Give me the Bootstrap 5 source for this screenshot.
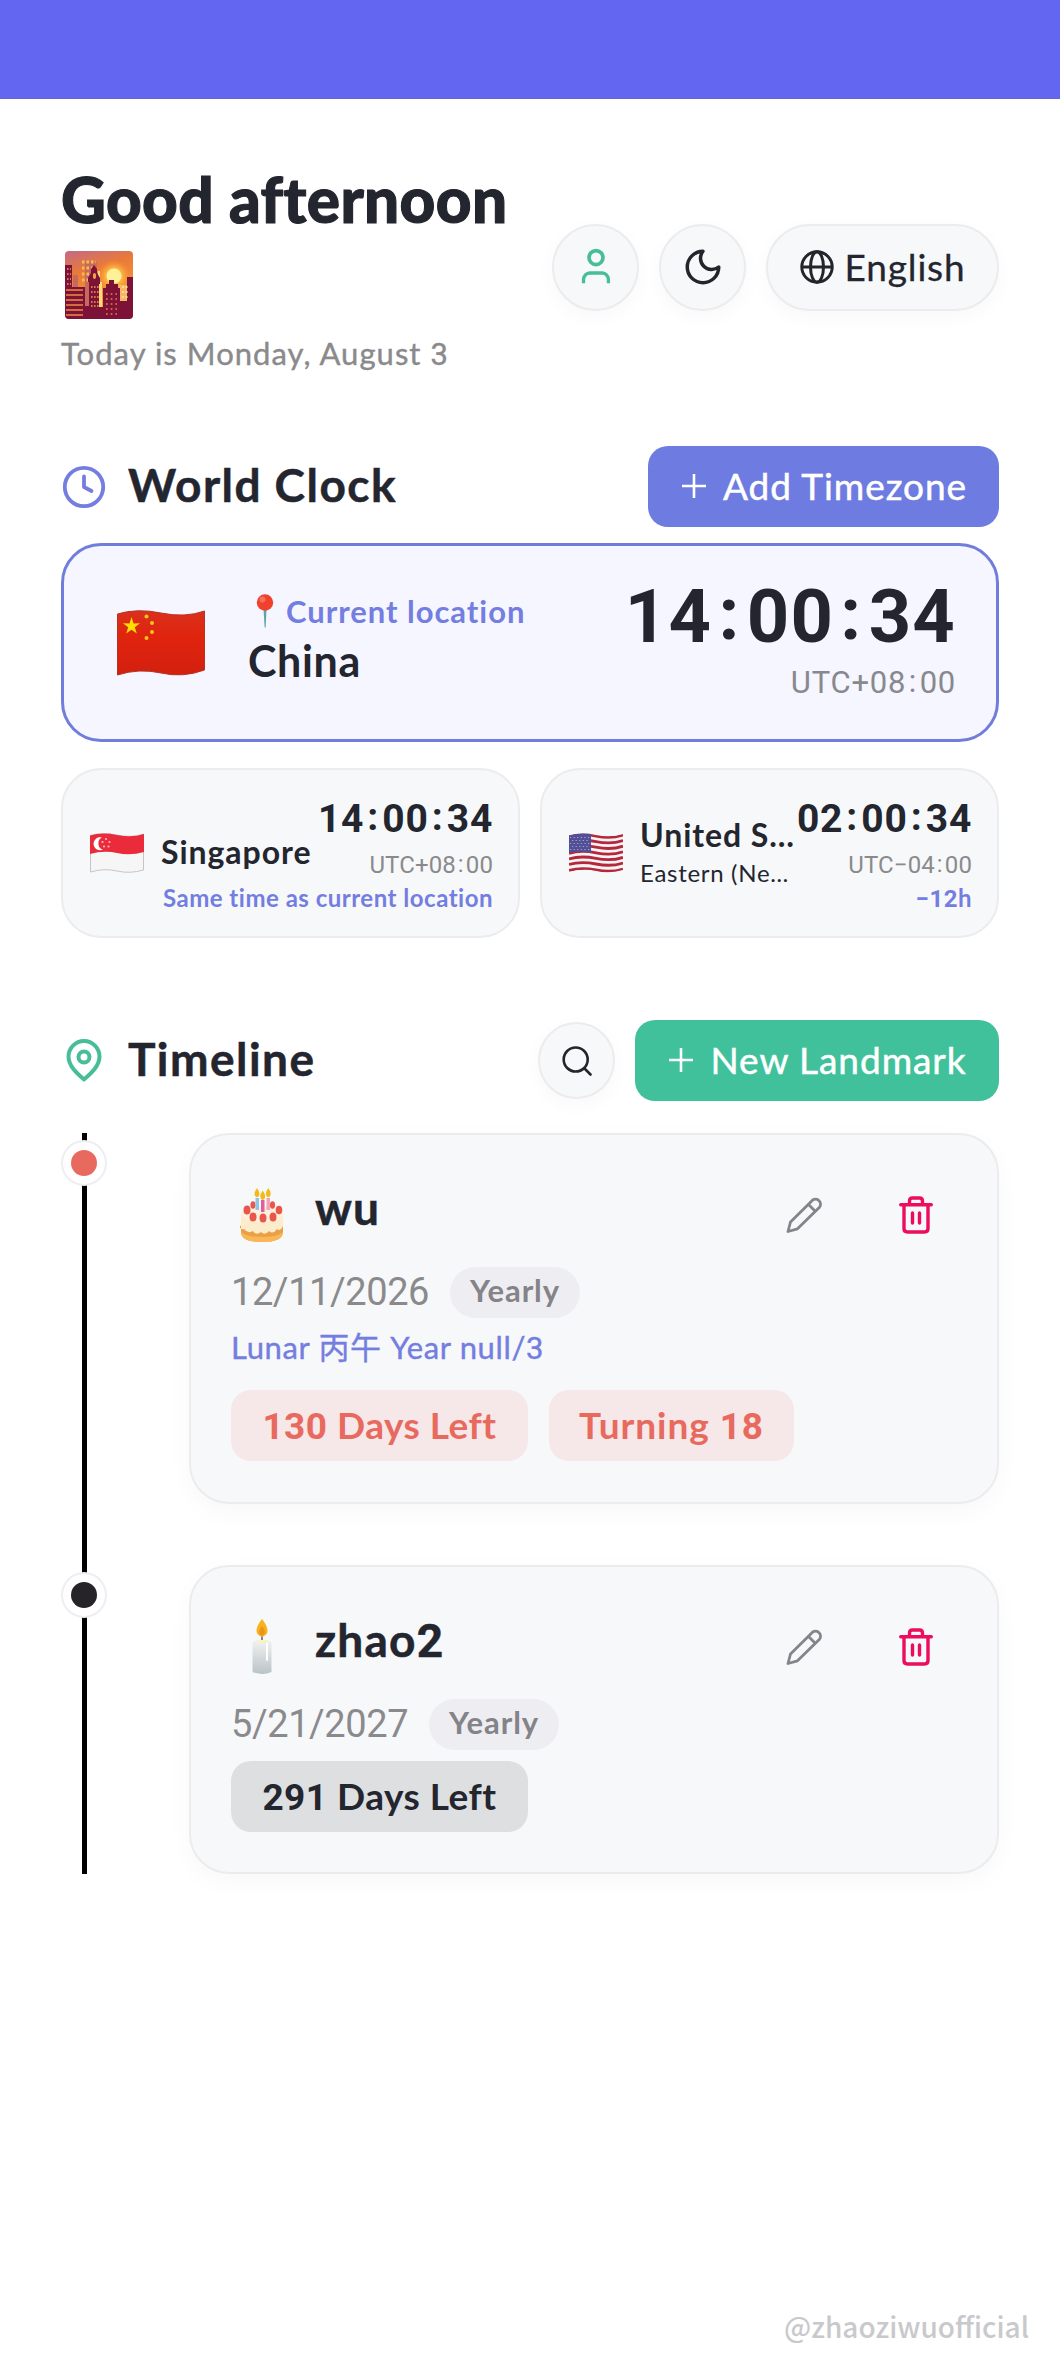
<!DOCTYPE html>
<html lang="en">
<head>
<meta charset="utf-8">
<meta name="viewport" content="width=device-width, initial-scale=1">
<title>World Clock &amp; Timeline</title>
<link href="https://cdn.jsdelivr.net/npm/bootstrap@5.3.0/dist/css/bootstrap.min.css" rel="stylesheet">
<style>
:root{--ink:#23252f;--soft:#8a8a8c;--indigo:#6e7be0;--green:#40c19b;--panel:#f7f8fa;--edge:#ececef}
body{font-family:Lato,"Noto Sans CJK SC",sans-serif;color:var(--ink);background:#fff;height:2376px;position:relative;overflow-x:hidden}
svg{display:block;flex:none}
.topbar{height:99px;background:#6366f0;border-bottom:1px solid #6a62d2}
.page{padding:62px 61px 0}
.num{font-family:Roboto,sans-serif}
span.inl{line-height:0}
.nowrap{white-space:nowrap}
.hello{font-size:62px;line-height:76px;font-weight:900;margin:0;letter-spacing:.35px;-webkit-text-stroke:1.1px var(--ink)}
.skyline{margin:14px 0 0 4px}
.today{font-size:31px;line-height:44px;color:var(--soft);margin-top:12px;letter-spacing:1.04px;-webkit-text-stroke:.4px var(--soft)}
.tools{gap:20px;margin-top:-2px}
.soft-btn{height:87px;border:2px solid var(--edge);border-radius:44px;background:var(--panel);box-shadow:0 6px 20px rgba(0,0,0,.03);padding:0;color:var(--ink)}
.soft-btn.round{width:87px}
.soft-btn.find{width:77px;height:77px;margin-right:20px}
.soft-btn.lang{width:233px;font-size:37px;line-height:40px;letter-spacing:.85px;gap:11px;-webkit-text-stroke:.3px var(--ink)}
.sect{height:81px}
.sect h2{font-size:46px;line-height:60px;font-weight:700;margin:0 0 0 21px;padding-bottom:4px;letter-spacing:1.46px;-webkit-text-stroke:.5px var(--ink)}
.act{height:81px;border-radius:20px;color:#fff;font-size:37px;border:0;padding:0 0 2px 2px;gap:17px;letter-spacing:.95px;-webkit-text-stroke:.5px #fff}
.act-add{width:351px;background:var(--indigo)}
.act-new{width:364px;background:var(--green)}
.home{height:199px;border:3px solid #707ddb;border-radius:40px;background:#f5f6ff;margin-top:16px;padding:31px 40px 0 53px}
.flag-lg{margin-top:33px}
.place{margin:10px 0 0 43px}
.loc{font-size:31px;line-height:48px;font-weight:700;color:#737ee0;letter-spacing:.96px;padding-left:8px;gap:12px}
.cn{font-size:43px;line-height:52px;font-weight:700;letter-spacing:.66px}
.co{padding:0 .085em;position:relative;top:-.04em}
.big{font-size:74px;line-height:80px;font-weight:700;letter-spacing:1.2px}
.utc{font-size:31px;line-height:44px;color:#88888e;margin-top:4px;letter-spacing:.75px}
.zones{margin-top:26px}
.zone{width:459px;height:170px;border:2px solid var(--edge);border-radius:40px;background:var(--panel);padding:0 25px 0 27px}
.stack{display:grid;flex:1;align-items:center;margin-left:17px}
.stack>*{grid-area:1/1}
.who{padding-bottom:3px}
.when{padding-top:4px}
.zname{font-size:32px;line-height:40px;font-weight:700;letter-spacing:.95px}
.zsub{font-size:24px;line-height:30px;margin-top:3px;letter-spacing:.7px}
.ztime{font-size:39px;line-height:44px;font-weight:700;letter-spacing:.7px}
.zutc{font-size:24px;line-height:28px;color:var(--soft);margin-top:10px;letter-spacing:.1px}
.zdiff{font-size:24px;line-height:32px;font-weight:700;color:#737ee0;margin-top:3px;letter-spacing:.5px}
.timeline-head{margin-top:82px}
.rail{width:46px;background:linear-gradient(#000,#000) 21px 0/5px 100% no-repeat}
.dot{width:46px;height:46px;border-radius:50%;background:#fff;border:2px solid #efedf3;margin-top:7px}
.dot i{width:26px;height:26px;border-radius:50%;background:#e86a5e}
.dot i.past{background:#262429}
.mark-card{width:810px;border:2px solid var(--edge);border-radius:40px;background:var(--panel);box-shadow:0 8px 26px rgba(0,0,0,.03);padding:48px 64px 0 40px}
.mark-a{height:371px;margin-bottom:61px}
.mark-b{height:309px}
.mark-head{height:64px}
.emo{margin-left:9px}
.bin{margin-left:77px}
.mname{font-size:46px;line-height:60px;font-weight:700;padding-bottom:14px;margin-left:31px;letter-spacing:1.2px;-webkit-text-stroke:.5px var(--ink)}
.mrow{margin-top:20px;gap:21px}
.mdate{font-size:38px;line-height:51px;color:var(--soft);letter-spacing:-.42px}
.often{height:51px;width:130px;border-radius:26px;background:#eeeef2;color:#838388;font-size:31px;line-height:46px;font-weight:700;letter-spacing:.92px}
.lunar{font-size:31px;line-height:44px;color:#737ee0;margin-top:7px;letter-spacing:.63px;-webkit-text-stroke:.4px #737ee0}
.tagrow{margin-top:21px;gap:21px}
.tagrow.tight{margin-top:11px}
.tagx{height:71px;width:297px;border-radius:20px;font-size:37px;line-height:69px;font-weight:700;background:#f6e7e8;color:#e86a5e;letter-spacing:.5px}
.tagx.age{width:245px;letter-spacing:.94px}
.tagx.dark{background:#dedfe1;color:var(--ink)}
.credit{position:absolute;right:31px;top:2304px;font:500 28px/44px "Noto Sans CJK SC",sans-serif;color:#c9c9cc}
</style>
</head>
<body>
<div class="topbar"></div>
<main class="page">
  <header class="d-flex justify-content-between align-items-center">
    <div>
      <h1 class="hello nowrap">Good afternoon</h1>
      <svg class="skyline" width="68" height="68" viewBox="0 0 68 68"><defs><linearGradient id="sk" x1="0" y1="0" x2=".3" y2="1"><stop offset="0" stop-color="#c26a86"/><stop offset=".35" stop-color="#ea7a38"/><stop offset="1" stop-color="#f9a63c"/></linearGradient><clipPath id="rc"><rect width="68" height="68" rx="4"/></clipPath><radialGradient id="gl"><stop offset=".4" stop-color="#ffc94a"/><stop offset="1" stop-color="#ff9a2e" stop-opacity="0"/></radialGradient></defs><g clip-path="url(#rc)"><rect width="68" height="68" fill="url(#sk)"/><circle cx="49" cy="25" r="16" fill="url(#gl)"/><circle cx="49" cy="25" r="7.500" fill="#fff09a"/><path d="M8 24h5v12h7V11h12v45H8z" fill="#c8695f"/><path d="M17 11h14M17 17h12M17 23h8M17 29h7" stroke="#f4c04c" stroke-width="3" stroke-dasharray="2.500 2"/><path d="M54 34h8V28h2v24H54z" fill="#f6b768"/><path d="M33 20h2v11h2v27h-3z" fill="#ffd978"/><path d="M0 14h7v22h13v19h4V31h-1v-4l3-5v-4l3-4 3 4v4l3 5v6h-1v23h4V37h3v-4h3v-4h5v4h4v4h2v13h7V26h6v42H0z" fill="#7d1238"/><path d="M1 39h17M1 44h17M1 49h17M1 54h17M1 59h17M1 64h17" stroke="#ee8a3c" stroke-width="1.500"/><path d="M2 18h4M2 23h4M2 28h4M2 33h4M26 36h8M26 41h8M26 46h8M26 51h8M26 55h8" stroke="#f2a04a" stroke-width="1.600" stroke-dasharray="1.600 1.400"/><path d="M41 43h11M41 48h11M41 53h11M41 58h11M41 63h11" stroke="#ef7f45" stroke-width="1.700" stroke-dasharray="1.700 3"/><path d="M57 36h6M57 41h6M57 46h6" stroke="#fbe08a" stroke-width="2" stroke-dasharray="2 1.500"/><ellipse cx="29.500" cy="25" rx="1.600" ry="3" fill="#f2a04a"/></g></svg>
      <div class="today nowrap">Today is Monday, August <span class="num inl">3</span></div>
    </div>
    <div class="tools d-flex">
      <button class="soft-btn round d-flex align-items-center justify-content-center"><svg width="42" height="42" viewBox="0 0 24 24" fill="none" stroke="#47bd98" stroke-width="2.100" stroke-linejoin="round"><path d="M20 21.500v-2a4 4 0 0 0-4-4H8a4 4 0 0 0-4 4v2" transform="translate(1.300 .2) scale(.89 .98)"/><circle cx="12" cy="6.600" r="4"/></svg></button>
      <button class="soft-btn round d-flex align-items-center justify-content-center"><svg width="42" height="42" viewBox="0 0 24 24" fill="none" stroke="#23252b" stroke-width="2" stroke-linecap="round" stroke-linejoin="round"><path d="M12 3a6.400 6.400 0 0 0 9 9 9 9 0 1 1-9-9Z"/></svg></button>
      <button class="soft-btn lang d-flex align-items-center justify-content-center"><svg width="34" height="34" viewBox="0 0 34 34" fill="none" stroke="#23252b" stroke-width="3"><circle cx="17" cy="17" r="15.200"/><ellipse cx="17" cy="17" rx="6.500" ry="15.200"/><path d="M2 17h30"/></svg><span>English</span></button>
    </div>
  </header>

  <section style="margin-top:71px">
    <div class="sect d-flex align-items-center">
      <svg width="46" height="46" viewBox="0 0 46 46" fill="none" stroke="#737ee0" stroke-width="3.800" stroke-linecap="round" stroke-linejoin="round"><circle cx="23" cy="23" r="19.200"/><path d="M23 12.500V23l7.500 4"/></svg>
      <h2 class="nowrap">World Clock</h2>
      <button class="act act-add ms-auto d-flex align-items-center justify-content-center"><svg width="24" height="24" viewBox="0 0 24 24" stroke="#fff" stroke-width="2.600"><path d="M12 0v24M0 12h24"/></svg><span>Add Timezone</span></button>
    </div>
    <div class="home d-flex">
      <svg class="flag-lg" width="88" height="66" viewBox="0 0 88 66"><defs><linearGradient id="cf" x2="0" y2="1"><stop offset="0" stop-color="#d9301c"/><stop offset=".4" stop-color="#e0240e"/><stop offset="1" stop-color="#d2200f"/></linearGradient></defs><path d="M.5 4Q20-2 44 3T87.500 1V60Q66 68 44 63T.5 65Z" fill="url(#cf)" stroke="#b83320"/><path d="M14.500 7l2 6.500 6.500-.3-5.200 4 2 6.300-5.300-3.800-5.300 3.800 2-6.300-5.200-4 6.500.3z" fill="#fd0"/><g fill="#f8c31a"><circle cx="29.500" cy="6.500" r="2"/><circle cx="35" cy="13" r="2"/><circle cx="35" cy="22" r="2"/><circle cx="29.500" cy="28" r="2"/></g></svg>
      <div class="place">
        <div class="loc d-flex align-items-center nowrap"><svg width="18" height="34" viewBox="0 0 18 34"><path d="M7.500 15h3l-.8 18.500h-1z" fill="#5fa3a6"/><circle cx="9" cy="8.500" r="8.200" fill="#f0412f"/><circle cx="6.500" cy="5.500" r="3" fill="#f7705c"/></svg><span>Current location</span></div>
        <div class="cn">China</div>
      </div>
      <div class="ms-auto text-end num nowrap">
        <div class="big">14<span class="co">:</span>00<span class="co">:</span>34</div>
        <div class="utc">UTC+08<span class="co">:</span>00</div>
      </div>
    </div>
    <div class="zones d-flex justify-content-between">
      <div class="zone d-flex align-items-center">
        <svg width="54" height="40" viewBox="0 0 54 40"><path d="M.5 2.500Q12-1 27 2T53.500 1V37Q40 41 27 38T.5 39Z" fill="#f6f6f6" stroke="#c8c4c4"/><path d="M0 2.500Q12-1 27 2T54 1V19Q40 23 27 20T0 21Z" fill="#e92b3c"/><path d="M12 4.500a6.500 6.500 0 1 0 1 12 5.800 6.300 0 0 1-1-12z" fill="#fff"/><g fill="#fbb8be"><circle cx="16" cy="6" r="1.100"/><circle cx="12.500" cy="9" r="1.100"/><circle cx="19.500" cy="9" r="1.100"/><circle cx="14" cy="13.500" r="1.100"/><circle cx="18.500" cy="13.500" r="1.100"/></g></svg>
        <div class="stack">
          <div class="who"><div class="zname nowrap">Singapore</div></div>
          <div class="when text-end nowrap">
            <div class="ztime num">14<span class="co">:</span>00<span class="co">:</span>34</div>
            <div class="zutc num">UTC+08<span class="co">:</span>00</div>
            <div class="zdiff">Same time as current location</div>
          </div>
        </div>
      </div>
      <div class="zone d-flex align-items-center">
        <svg width="54" height="40" viewBox="0 0 54 40"><defs><clipPath id="us"><path d="M0 2.500Q12-1 27 2T54 1V37Q40 41 27 38T0 39Z"/></clipPath></defs><g clip-path="url(#us)"><rect width="54" height="40" fill="#f7f3f4"/><g fill="none" stroke="#b4283c" stroke-width="2.850"><path d="M0 3.500Q12 0 27 3T54 2"/><path d="M0 9.100Q12 5.600 27 8.600T54 7.600"/><path d="M0 14.700Q12 11.200 27 14.200T54 13.200"/><path d="M0 20.300Q12 16.800 27 19.800T54 18.800"/><path d="M0 25.900Q12 22.400 27 25.400T54 24.400"/><path d="M0 31.500Q12 28 27 31T54 30"/><path d="M0 37.500Q12 34 27 37T54 36"/></g><path d="M0 0H22V20Q11 17 0 20Z" fill="#524f96"/><path d="M1 4.500h20M3 7.500h18M1 10.500h20M3 13.500h18M1 16.500h20" stroke="#aaa8d0" stroke-width="1.200" stroke-dasharray="1.200 2.400"/></g></svg>
        <div class="stack">
          <div class="who"><div class="zname nowrap">United S…</div><div class="zsub nowrap">Eastern (Ne…</div></div>
          <div class="when text-end nowrap">
            <div class="ztime num">02<span class="co">:</span>00<span class="co">:</span>34</div>
            <div class="zutc num">UTC−04<span class="co">:</span>00</div>
            <div class="zdiff"><span class="num inl">−12</span>h</div>
          </div>
        </div>
      </div>
    </div>
  </section>

  <section class="timeline-head">
    <div class="sect d-flex align-items-center">
      <svg width="46" height="46" viewBox="0 0 46 46" fill="none" stroke="#47bd98" stroke-width="4" stroke-linejoin="round"><path d="M23 41.500C18 37 7.500 29 7.500 18.500a15.500 15.500 0 0 1 31 0C38.500 29 28 37 23 41.500Z"/><circle cx="23" cy="19" r="5.500"/></svg>
      <h2 class="nowrap">Timeline</h2>
      <button class="soft-btn find ms-auto d-flex align-items-center justify-content-center"><svg width="30" height="30" viewBox="0 0 30 30" fill="none" stroke="#23252b" stroke-width="2.600" stroke-linecap="round"><circle cx="13.700" cy="13.500" r="12"/><path d="M22.500 22.500l6 6"/></svg></button>
      <button class="act act-new d-flex align-items-center justify-content-center"><svg width="24" height="24" viewBox="0 0 24 24" stroke="#fff" stroke-width="2.600"><path d="M12 0v24M0 12h24"/></svg><span>New Landmark</span></button>
    </div>

    <div style="margin-top:32px">
      <div class="d-flex justify-content-between">
        <div class="rail"><div class="dot d-flex align-items-center justify-content-center"><i></i></div></div>
        <article class="mark-card mark-a">
          <div class="mark-head d-flex align-items-center">
            <svg class="emo" width="44" height="54" viewBox="0 0 44 54"><path d="M1 26v18q0 10 21 10t21-10V26z" fill="#fdeccb"/><path d="M1 38v6q0 10 21 10t21-10v-6q-3 6-6 3-4 6-8 2-4 5-8 1-5 4-8-1-5 3-9-2-4 1-5-4z" fill="#e9a046"/><path d="M1 44q0 10 21 10t21-10q-5 5-21 5T1 44z" fill="#fbb657"/><ellipse cx="22" cy="26" rx="21" ry="8" fill="#fdf0dc"/><g fill="#e9574c"><ellipse cx="7" cy="22" rx="3.500" ry="4.500"/><ellipse cx="13" cy="17" rx="2.600" ry="3.800"/><ellipse cx="32.500" cy="17" rx="2.600" ry="3.800"/><ellipse cx="39" cy="22" rx="3.300" ry="4.300"/><ellipse cx="13" cy="29" rx="3.500" ry="4.500"/><ellipse cx="23" cy="30" rx="3.500" ry="4.500"/><ellipse cx="33" cy="29" rx="3.500" ry="4.500"/></g><path d="M15.500 10h3.500v12h-3.500z" fill="#8cc4ea"/><path d="M21 12h3.500v12H21z" fill="#dd5f9d"/><path d="M26.500 10h3.500v12h-3.500z" fill="#f3a3b8"/><g fill="#f6b91a"><path d="M17 0q5 7 0 9.500-5-2.500 0-9.500zM22.700 2.500q5 7 0 9.500-5-2.500 0-9.500zM28.300 0q5 7 0 9.500-5-2.500 0-9.500z"/></g></svg>
            <span class="mname">wu</span>
            <svg class="ms-auto" width="36" height="36" viewBox="0 0 36 36" fill="none" stroke="#858589" stroke-width="2.800" stroke-linejoin="round"><path d="M2 34.500L4.500 25 26.500 3.200a5 5 0 0 1 7 7L11.500 31.800zM22.500 7.500l7 7"/></svg>
            <svg class="bin" width="34" height="38" viewBox="0 0 34 38" fill="none" stroke="#ec0e5c" stroke-width="3.400" stroke-linecap="round" stroke-linejoin="round"><path d="M1.700 8.700h30.600M5 9v23.500q0 3.500 3.500 3.500h17q3.500 0 3.500-3.500V9M10.500 8V5q0-3 3-3h7q3 0 3 3v3M13.500 17v10M20.500 17v10"/></svg>
          </div>
          <div class="mrow d-flex align-items-center"><span class="mdate num">12/11/2026</span><span class="often text-center">Yearly</span></div>
          <div class="lunar nowrap">Lunar <span class="inl">丙午</span> Year null/<span class="num inl">3</span></div>
          <div class="tagrow d-flex"><div class="tagx text-center"><span class="num inl">130</span> Days Left</div><div class="tagx age text-center">Turning <span class="num inl">18</span></div></div>
        </article>
      </div>
      <div class="d-flex justify-content-between">
        <div class="rail"><div class="dot d-flex align-items-center justify-content-center"><i class="past"></i></div></div>
        <article class="mark-card mark-b">
          <div class="mark-head d-flex align-items-center">
            <svg class="emo" width="44" height="56" viewBox="0 0 44 56"><defs><linearGradient id="wx" x2="0" y2="1"><stop offset="0" stop-color="#f1f2f2"/><stop offset="1" stop-color="#b9c3c7"/></linearGradient></defs><path d="M12.500 23q9-4 19 0v30q-9 4-19 0z" fill="url(#wx)"/><path d="M13 22.500q9-4 18 0-9 3.500-18 0z" fill="#f6f3c8"/><path d="M26 24v17q2 2 2 0V24z" fill="#fff"/><path d="M22 14v7" stroke="#4b6a6c" stroke-width="1.500"/><path d="M22 0q11 14 0 18-11-4 0-18z" fill="#f7b21c"/><path d="M22 7q6 7 0 10-6-3 0-10z" fill="#f1921a"/></svg>
            <span class="mname">zhao<span class="num inl">2</span></span>
            <svg class="ms-auto" width="36" height="36" viewBox="0 0 36 36" fill="none" stroke="#858589" stroke-width="2.800" stroke-linejoin="round"><path d="M2 34.500L4.500 25 26.500 3.200a5 5 0 0 1 7 7L11.500 31.800zM22.500 7.500l7 7"/></svg>
            <svg class="bin" width="34" height="38" viewBox="0 0 34 38" fill="none" stroke="#ec0e5c" stroke-width="3.400" stroke-linecap="round" stroke-linejoin="round"><path d="M1.700 8.700h30.600M5 9v23.500q0 3.500 3.500 3.500h17q3.500 0 3.500-3.500V9M10.500 8V5q0-3 3-3h7q3 0 3 3v3M13.500 17v10M20.500 17v10"/></svg>
          </div>
          <div class="mrow d-flex align-items-center"><span class="mdate num">5/21/2027</span><span class="often text-center">Yearly</span></div>
          <div class="tagrow tight d-flex"><div class="tagx dark text-center"><span class="num inl">291</span> Days Left</div></div>
        </article>
      </div>
    </div>
  </section>
</main>
<div class="credit">@zhaoziwuofficial</div>
<script src="https://cdn.jsdelivr.net/npm/bootstrap@5.3.0/dist/js/bootstrap.bundle.min.js"></script>
</body>
</html>
